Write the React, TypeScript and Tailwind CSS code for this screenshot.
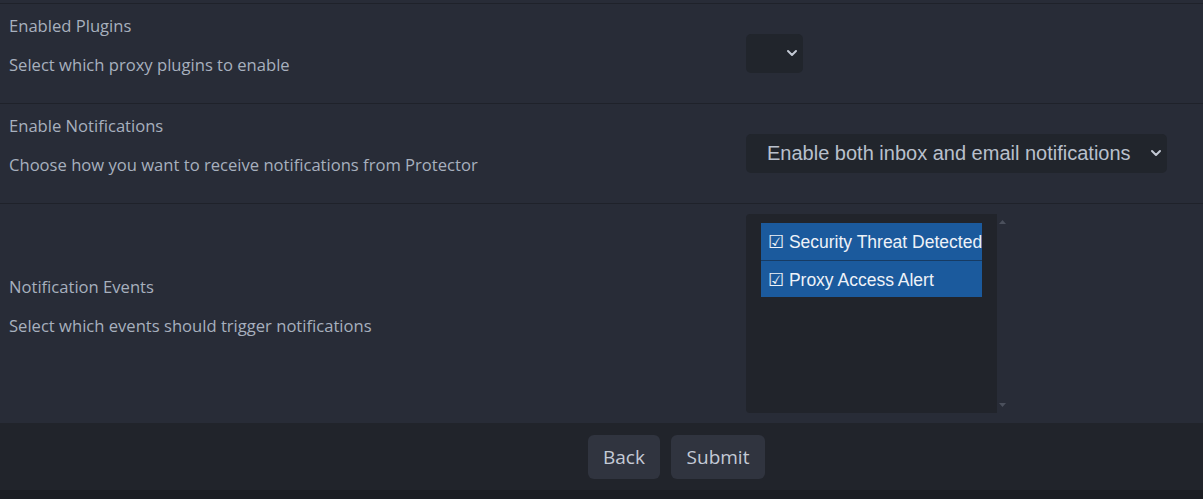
import { ChevronDown } from "lucide-react";

const labelFont = { fontFamily: '"Open Sans", "Noto Sans", sans-serif' };

function Chevron() {
    return <ChevronDown size={16} strokeWidth={3} className="text-[#c3c9d4]" />;
}

function FieldLabel({ title, desc }: { title: string; desc: string }) {
    return (
        <div className="flex flex-col pb-[15px] text-[16.6px] leading-[24px] text-[#a7b0be]" style={labelFont}>
            <span>{title}</span>
            <span className="mt-[15px]">{desc}</span>
        </div>
    );
}

export default function App() {
    const events = ["Security Threat Detected", "Proxy Access Alert"];

    return (
        <div className="w-full min-h-[499px] bg-[#1b1d22] flex flex-col">
            <div className="bg-[#282c37]">
                <div className="h-[3px]" />

                {/* Enabled Plugins */}
                <div className="flex items-center border-t border-[#1f222a] pt-[10px] pb-[11px]">
                    <div className="w-[746px] pl-[9px]">
                        <FieldLabel title="Enabled Plugins" desc="Select which proxy plugins to enable" />
                    </div>
                    <div className="w-[57px] h-[39px] rounded-[5px] bg-[#21252c] flex items-center justify-end pr-[3px]">
                        <Chevron />
                    </div>
                </div>

                {/* Enable Notifications */}
                <div className="flex items-center border-t border-[#1f222a] pt-[10px] pb-[11px]">
                    <div className="w-[746px] pl-[9px]">
                        <FieldLabel
                            title="Enable Notifications"
                            desc="Choose how you want to receive notifications from Protector"
                        />
                    </div>
                    <div
                        className="w-[421px] h-[39px] rounded-[5px] bg-[#21252c] flex items-center justify-between pl-[21px] pr-[3px] text-[20px] text-[#b9c0cc]"
                        style={{ fontFamily: '"Liberation Sans", Arial, sans-serif' }}
                    >
                        <span>Enable both inbox and email notifications</span>
                        <Chevron />
                    </div>
                </div>

                {/* Notification Events */}
                <div className="flex items-center border-t border-[#1f222a] pt-[10px] pb-[10px]">
                    <div className="w-[746px] pl-[9px]">
                        <FieldLabel title="Notification Events" desc="Select which events should trigger notifications" />
                    </div>
                    <div className="flex h-[199px]">
                        <div
                            className="w-[251px] h-full rounded-l-[4px] bg-[#21242b] px-[15px] pt-[9px] text-[17.5px] text-[#eef2f8]"
                            style={{ fontFamily: '"Liberation Sans", Arial, sans-serif' }}
                        >
                            {events.map((ev, i) => (
                                <div
                                    key={ev}
                                    className={`h-[37px] flex items-center pl-[7px] pt-[2px] bg-[#1b5a9d] whitespace-nowrap ${i > 0 ? "border-t border-[#173b63]" : ""}`}
                                >
                                    ☑ {ev}
                                </div>
                            ))}
                        </div>
                        <div className="w-[10px] h-full flex flex-col items-center justify-between py-[6px]">
                            <svg width="7" height="4" viewBox="0 0 7 4">
                                <path d="M0 4 L3.5 0 L7 4 Z" fill="#4b505c" />
                            </svg>
                            <svg width="7" height="4" viewBox="0 0 7 4">
                                <path d="M0 0 L3.5 4 L7 0 Z" fill="#4b505c" />
                            </svg>
                        </div>
                    </div>
                </div>
            </div>

            {/* Footer actions */}
            <div className="bg-[#21242b] flex justify-center gap-[11px] pt-[12px] pb-[11px] pl-[150px]" style={labelFont}>
                <button className="w-[72px] h-[44px] pt-[1px] rounded-[6px] bg-[#30343f] text-[19px] text-[#c4cad6]">
                    Back
                </button>
                <button className="w-[94px] h-[44px] pt-[1px] rounded-[6px] bg-[#30343f] text-[19px] text-[#c4cad6]">
                    Submit
                </button>
            </div>
        </div>
    );
}
